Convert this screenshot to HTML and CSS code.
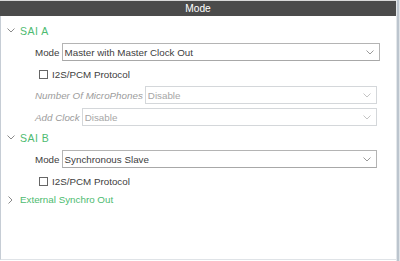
FILE: index.html
```html
<!DOCTYPE html>
<html>
<head>
<meta charset="utf-8">
<link rel="stylesheet" href="styles.css">
</head>
<body>
<div class="frame">
  <div class="main">
    <div class="topline"></div>
    <div class="header">Mode</div>
    <div class="content">
      <div class="group g-a">
        <svg class="chev" width="8" height="5" viewBox="0 0 8 5"><path d="M0.5 0.5 L4 4 L7.5 0.5" fill="none" stroke="#8a8a8a" stroke-width="1"/></svg>
        <span class="gtext">SAI A</span>
      </div>
      <div class="field f-mode1">
        <span class="label">Mode</span>
        <div class="select wide">
          <span class="stext">Master with Master Clock Out</span>
          <svg class="schev" width="8" height="5" viewBox="0 0 8 5"><path d="M0.5 0.5 L4 4 L7.5 0.5" fill="none" stroke="#9a9a9a" stroke-width="1"/></svg>
        </div>
      </div>
      <div class="check c-a">
        <span class="box"></span>
        <span class="ctext">I2S/PCM Protocol</span>
      </div>
      <div class="field f-nom">
        <span class="label dis">Number Of MicroPhones</span>
        <div class="select disabled">
          <span class="stext">Disable</span>
          <svg class="schev" width="8" height="5" viewBox="0 0 8 5"><path d="M0.5 0.5 L4 4 L7.5 0.5" fill="none" stroke="#c4c4c4" stroke-width="1"/></svg>
        </div>
      </div>
      <div class="field f-clk">
        <span class="label dis">Add Clock</span>
        <div class="select disabled">
          <span class="stext">Disable</span>
          <svg class="schev" width="8" height="5" viewBox="0 0 8 5"><path d="M0.5 0.5 L4 4 L7.5 0.5" fill="none" stroke="#c4c4c4" stroke-width="1"/></svg>
        </div>
      </div>
      <div class="group g-b">
        <svg class="chev" width="8" height="5" viewBox="0 0 8 5"><path d="M0.5 0.5 L4 4 L7.5 0.5" fill="none" stroke="#8a8a8a" stroke-width="1"/></svg>
        <span class="gtext">SAI B</span>
      </div>
      <div class="field f-mode2">
        <span class="label">Mode</span>
        <div class="select">
          <span class="stext">Synchronous Slave</span>
          <svg class="schev" width="8" height="5" viewBox="0 0 8 5"><path d="M0.5 0.5 L4 4 L7.5 0.5" fill="none" stroke="#9a9a9a" stroke-width="1"/></svg>
        </div>
      </div>
      <div class="check c-b">
        <span class="box"></span>
        <span class="ctext">I2S/PCM Protocol</span>
      </div>
      <div class="group g-ext">
        <svg class="chev right" width="5" height="8" viewBox="0 0 5 8"><path d="M0.5 0.5 L4 4 L0.5 7.5" fill="none" stroke="#8a8a8a" stroke-width="1"/></svg>
        <span class="gtext">External Synchro Out</span>
      </div>
    </div>
  </div>
  <div class="sidebar"></div>
</div>
</body>
</html>
```
FILE: styles.css
```css
* { box-sizing: border-box; }
html, body {
  margin: 0;
  padding: 0;
  background: #ffffff;
}
body {
  width: 400px;
  height: 261px;
  overflow: hidden;
  font-family: "Liberation Sans", Arial, sans-serif;
  font-size: 9.8px;
  color: #404040;
}
.frame {
  display: flex;
  width: 400px;
  height: 261px;
}
.main {
  width: 396px;
  height: 261px;
  display: flex;
  flex-direction: column;
}
.topline {
  height: 1px;
  background: #d9d9d9;
}
.header {
  height: 15px;
  background: #4b4b4b;
  color: #ffffff;
  text-align: center;
  line-height: 15px;
  font-size: 10.2px;
}
.content {
  flex: 1;
  border-left: 1px solid #c6cdd5;
  border-bottom: 1px solid #dfe3e7;
  margin-bottom: 1px;
  display: flex;
  flex-direction: column;
}
.sidebar {
  width: 4px;
  height: 261px;
  background: linear-gradient(to right, #e3e7ea 0, #e3e7ea 1px, #bcc5ce 1px, #bcc5ce 3px, #dfe4e8 3px);
}
.group {
  display: flex;
  align-items: center;
  height: 15px;
}
.chev {
  margin-left: 6px;
  width: 8px;
  flex: none;
}
.chev.right {
  margin-left: 7px;
  margin-right: 1px;
  width: 5px;
}
.gtext {
  margin-left: 5px;
  color: #4dbb70;
  font-size: 10.5px;
  letter-spacing: 0.5px;
}
.g-ext .gtext {
  font-size: 9.8px;
  letter-spacing: 0;
  margin-left: 6px;
}
.g-a { margin-top: 7px; }
.g-b { margin-top: 4px; }
.g-ext { margin-top: 3px; }
.field {
  display: flex;
  align-items: center;
  height: 18px;
  padding-left: 34px;
}
.label {
  margin-right: 2px;
  white-space: nowrap;
}
.label.dis {
  color: #9c9c9c;
  font-style: italic;
}
.select {
  height: 18px;
  border: 1px solid #b4b4b4;
  border-bottom-color: #a8a8a8;
  display: flex;
  align-items: center;
  justify-content: space-between;
  padding: 0 5px 0 2px;
  background: #ffffff;
  flex: 1;
  flex-basis: 0;
}
.f-mode1 { margin-top: 5px; padding-right: 16px; }
.f-mode2 { margin-top: 5px; padding-right: 19px; }
.f-nom, .f-clk { padding-right: 19px; }
.f-nom { margin-top: 4px; }
.f-clk { margin-top: 4px; }
.select.disabled {
  border-color: #d4d7da;
  color: #a6a6a6;
}
.stext { white-space: nowrap; }
.schev { flex: none; }
.check {
  display: flex;
  align-items: center;
  height: 15px;
  padding-left: 38px;
}
.c-a { margin-top: 6px; }
.c-b { margin-top: 6px; }
.box {
  width: 9px;
  height: 9px;
  border: 1px solid #666666;
  background: #ffffff;
  flex: none;
}
.ctext {
  margin-left: 4px;
}
```
